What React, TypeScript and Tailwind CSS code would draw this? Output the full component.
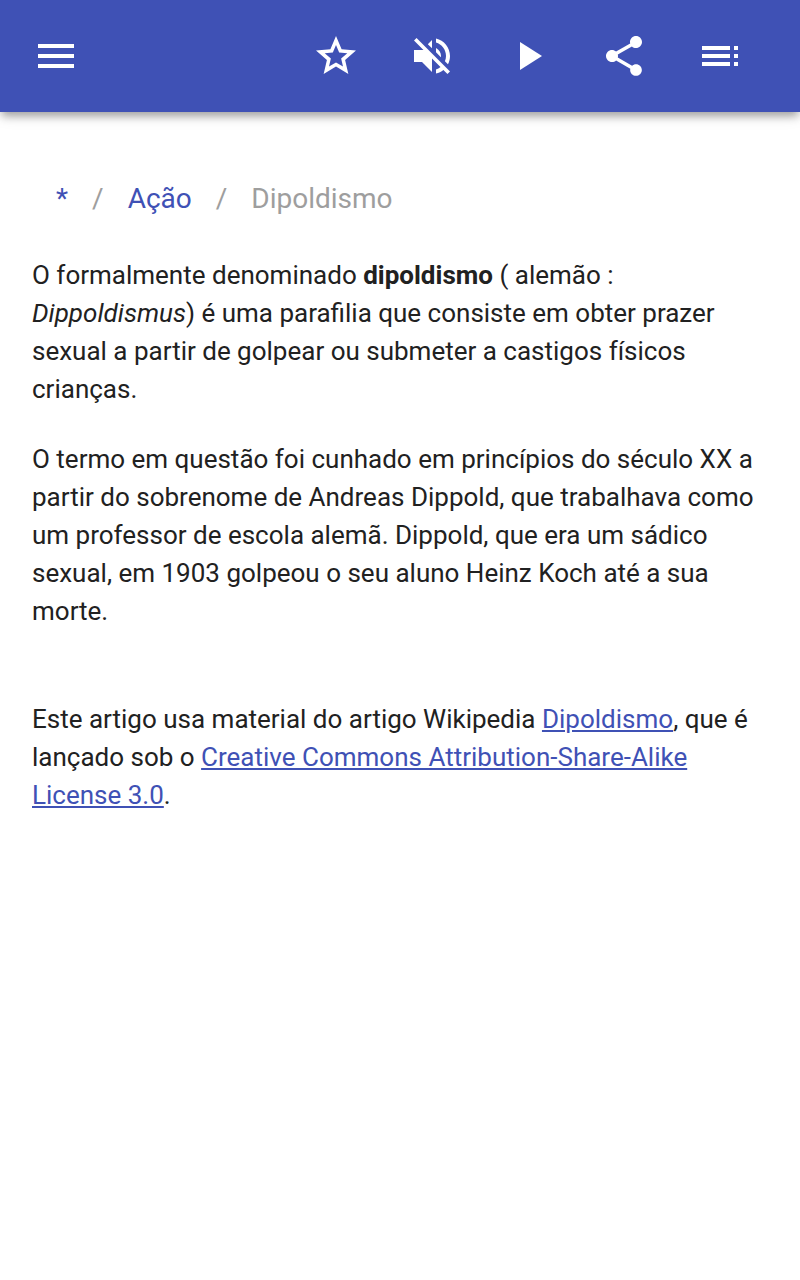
import type { ReactNode } from "react";

const icons = {
  menu: "M3 18h18v-2H3v2zm0-5h18v-2H3v2zm0-7v2h18V6H3z",
  star: "M22 9.24l-7.19-.62L12 2 9.19 8.63 2 9.24l5.46 4.73L5.82 21 12 17.27 18.18 21l-1.63-7.03L22 9.24zM12 15.2L8.5 17.3 9.43 13.3 6.35 10.63 10.42 10.27 12 6.5 13.58 10.27 17.65 10.63 14.57 13.3 15.5 17.3 12 15.2z",
  mute: "M16.5 12c0-1.77-1.02-3.29-2.5-4.03v2.21l2.45 2.45c.03-.2.05-.41.05-.63zm2.5 0c0 .94-.2 1.82-.54 2.64l1.51 1.51C20.63 14.91 21 13.5 21 12c0-4.28-2.99-7.86-7-8.77v2.06c2.89.86 5 3.54 5 6.71zM4.27 3L3 4.27 7.73 9H3v6h4l5 5v-6.73l4.25 4.25c-.67.52-1.42.93-2.25 1.18v2.06c1.38-.31 2.63-.95 3.69-1.81L19.73 21 21 19.73l-9-9L4.27 3zM12 4L9.91 6.09 12 8.18V4z",
  play: "M8 5v14l11-7z",
  share: "M18 16.08c-.76 0-1.44.3-1.96.77L8.91 12.7c.05-.23.09-.46.09-.7s-.04-.47-.09-.7l7.05-4.11c.54.5 1.25.81 2.04.81 1.66 0 3-1.34 3-3s-1.34-3-3-3-3 1.34-3 3c0 .24.04.47.09.7L8.04 9.81C7.5 9.31 6.79 9 6 9c-1.66 0-3 1.34-3 3s1.34 3 3 3c.79 0 1.5-.31 2.04-.81l7.12 4.16c-.05.21-.08.43-.08.65 0 1.61 1.31 2.92 2.92 2.92s2.92-1.31 2.92-2.92-1.31-2.92-2.92-2.92z",
  toc: "M3 9h14V7H3v2zm0 4h14v-2H3v2zm0 4h14v-2H3v2zm16 0h2v-2h-2v2zm0-10v2h2V7h-2zm0 6h2v-2h-2v2z",
};

function IconButton({ icon, label }: { icon: keyof typeof icons; label: string }) {
  return (
    <button type="button" aria-label={label} className="flex size-24 items-center justify-center">
      <svg viewBox="0 0 24 24" className="size-12 fill-current" aria-hidden="true">
        <path d={icons[icon]} />
      </svg>
    </button>
  );
}

function Link({ children }: { children: ReactNode }) {
  return (
    <a href="#" className="text-[#3f51b5] underline">
      {children}
    </a>
  );
}

export default function App() {
  return (
    <div className="min-h-screen bg-white font-[Roboto,sans-serif] text-[26px] leading-[38px] text-[#212121]">
      <header className="flex h-28 items-center justify-between bg-[#3f51b5] pr-8 pl-2 text-white shadow-[0_6px_8px_-2px_rgba(0,0,0,0.3),0_2px_16px_rgba(0,0,0,0.14)]">
        <IconButton icon="menu" label="Menu" />
        <div className="flex">
          <IconButton icon="star" label="Favorito" />
          <IconButton icon="mute" label="Som" />
          <IconButton icon="play" label="Reproduzir" />
          <IconButton icon="share" label="Compartilhar" />
          <IconButton icon="toc" label="Índice" />
        </div>
      </header>
      <main className="px-8 pt-16">
        <nav aria-label="Breadcrumb" className="px-6 pt-1 pb-2 text-[28px] leading-[38px] text-[#9e9e9e]">
          <ol className="flex gap-6">
            <li><a href="#" className="text-[#3f51b5]">*</a></li>
            <li aria-hidden="true">/</li>
            <li><a href="#" className="text-[#3f51b5]">Ação</a></li>
            <li aria-hidden="true">/</li>
            <li aria-current="page">Dipoldismo</li>
          </ol>
        </nav>
        <article className="pt-[30px]">
          <p>
            O formalmente denominado <b>dipoldismo</b> ( alemão : <i>Dippoldismus</i>) é uma parafilia que consiste em obter prazer sexual a partir de golpear ou submeter a castigos físicos crianças.
          </p>
          <p className="mt-8">
            O termo em questão foi cunhado em princípios do século XX a partir do sobrenome de Andreas Dippold, que trabalhava como um professor de escola alemã. Dippold, que era um sádico sexual, em 1903 golpeou o seu aluno Heinz Koch até a sua morte.
          </p>
          <p className="mt-[70px]">
            Este artigo usa material do artigo Wikipedia <Link>Dipoldismo</Link>, que é lançado sob o <Link>Creative Commons Attribution-Share-Alike License 3.0</Link>.
          </p>
        </article>
      </main>
    </div>
  );
}
